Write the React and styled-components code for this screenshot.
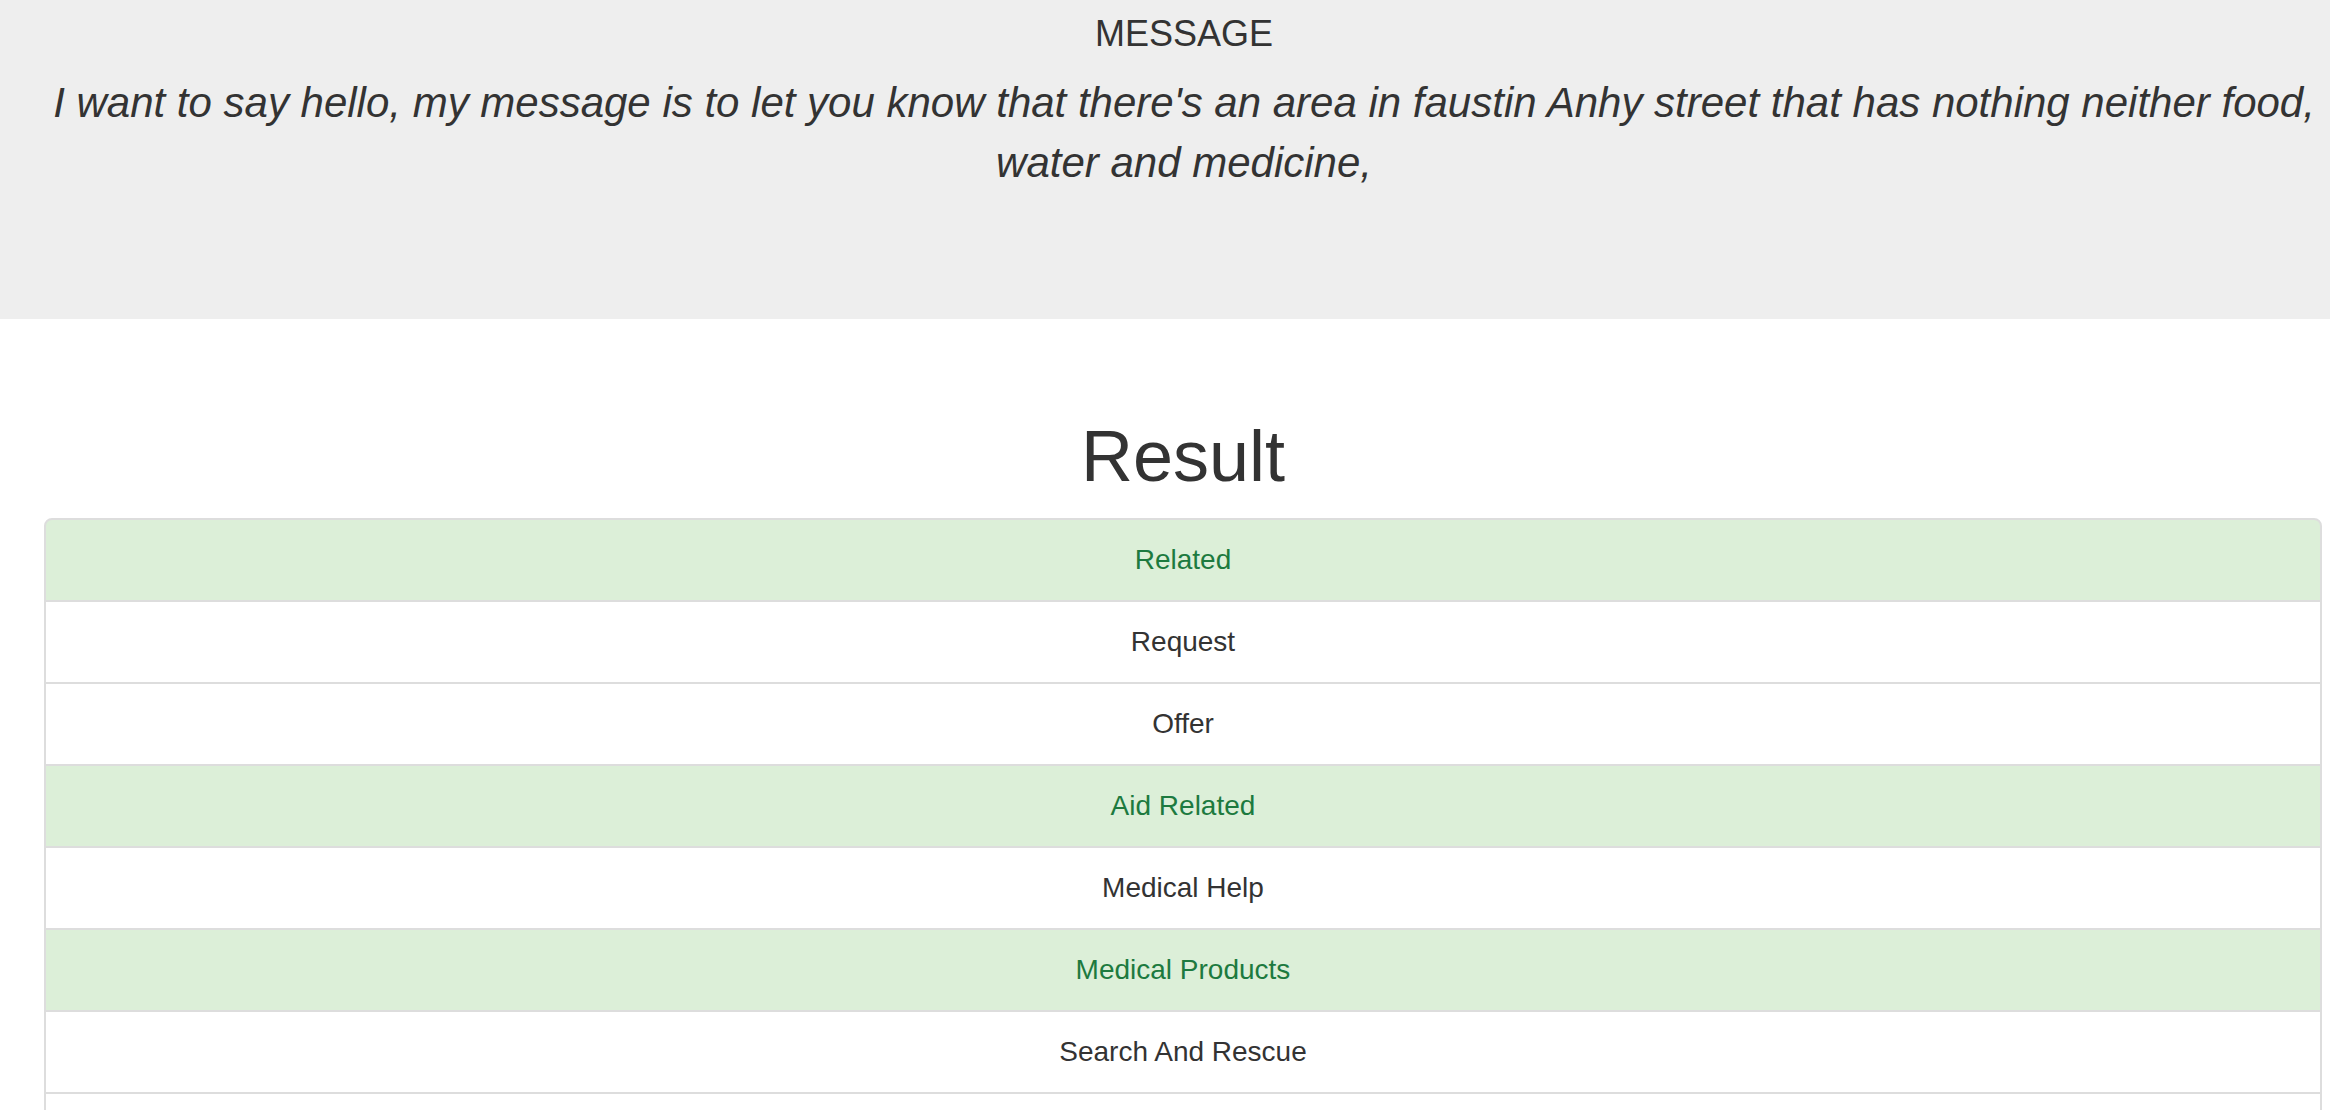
import React from "react";
import styled, { createGlobalStyle } from "styled-components";

const GlobalStyle = createGlobalStyle`
  html, body {
    margin: 0;
    padding: 0;
    background: #ffffff;
  }
  body {
    font-family: "Liberation Sans", Arial, Helvetica, sans-serif;
    color: #333333;
  }
  * { box-sizing: border-box; }
`;

const Page = styled.div`
  width: 100%;
  min-height: 1110px;
  display: flex;
  flex-direction: column;
`;

const Jumbotron = styled.header`
  background: #eeeeee;
  height: 319px;
  padding: 14px 8px 0 46px;
  text-align: center;
`;

const Label = styled.h4`
  margin: 0 0 19px;
  font-size: 36px;
  line-height: 40px;
  font-weight: 400;
  color: #333333;
`;

const MessageText = styled.p`
  margin: 0;
  font-size: 42px;
  line-height: 60px;
  font-style: italic;
  font-weight: 400;
  color: #333333;
`;

const Main = styled.main`
  padding: 0 8px 0 44px;
  display: flex;
  flex-direction: column;
`;

const Title = styled.h1`
  margin: 97px 0 22px;
  font-size: 72px;
  line-height: 80px;
  font-weight: 400;
  text-align: center;
  color: #333333;
`;

const List = styled.ul`
  list-style: none;
  margin: 0;
  padding: 0;
  display: flex;
  flex-direction: column;
`;

const Item = styled.li`
  display: block;
  margin-bottom: -2px;
  padding: 20px 30px;
  font-size: 28px;
  line-height: 40px;
  text-align: center;
  border: 2px solid #dddddd;
  background: ${(p) => (p.$hit ? "#dcefd8" : "#ffffff")};
  color: ${(p) => (p.$hit ? "#1d7a3f" : "#333333")};

  &:first-child {
    border-top-left-radius: 8px;
    border-top-right-radius: 8px;
  }
  &:last-child {
    margin-bottom: 0;
    border-bottom-left-radius: 8px;
    border-bottom-right-radius: 8px;
  }
`;

const categories = [
  ["Related", true],
  ["Request", false],
  ["Offer", false],
  ["Aid Related", true],
  ["Medical Help", false],
  ["Medical Products", true],
  ["Search And Rescue", false],
  ["Security", false],
  ["Military", false],
  ["Child Alone", false],
  ["Water", true],
  ["Food", true],
  ["Shelter", false],
  ["Clothing", false],
  ["Money", false],
  ["Missing People", false],
  ["Refugees", false],
  ["Death", false],
  ["Other Aid", false],
  ["Infrastructure Related", false],
  ["Transport", false],
  ["Buildings", false],
  ["Electricity", false],
  ["Tools", false],
  ["Hospitals", false],
  ["Shops", false],
  ["Aid Centers", false],
  ["Other Infrastructure", false],
  ["Weather Related", false],
  ["Floods", false],
  ["Storm", false],
  ["Fire", false],
  ["Earthquake", false],
  ["Cold", false],
  ["Other Weather", false],
  ["Direct Report", false],
];

export default function App() {
  return (
    <Page>
      <GlobalStyle />
      <Jumbotron>
        <Label>MESSAGE</Label>
        <MessageText>
          I want to say hello, my message is to let you know that there's an area in faustin Anhy
          street that has nothing neither food, water and medicine,
        </MessageText>
      </Jumbotron>
      <Main>
        <Title>Result</Title>
        <List>
          {categories.map(([name, hit]) => (
            <Item key={name} $hit={hit}>
              {name}
            </Item>
          ))}
        </List>
      </Main>
    </Page>
  );
}
